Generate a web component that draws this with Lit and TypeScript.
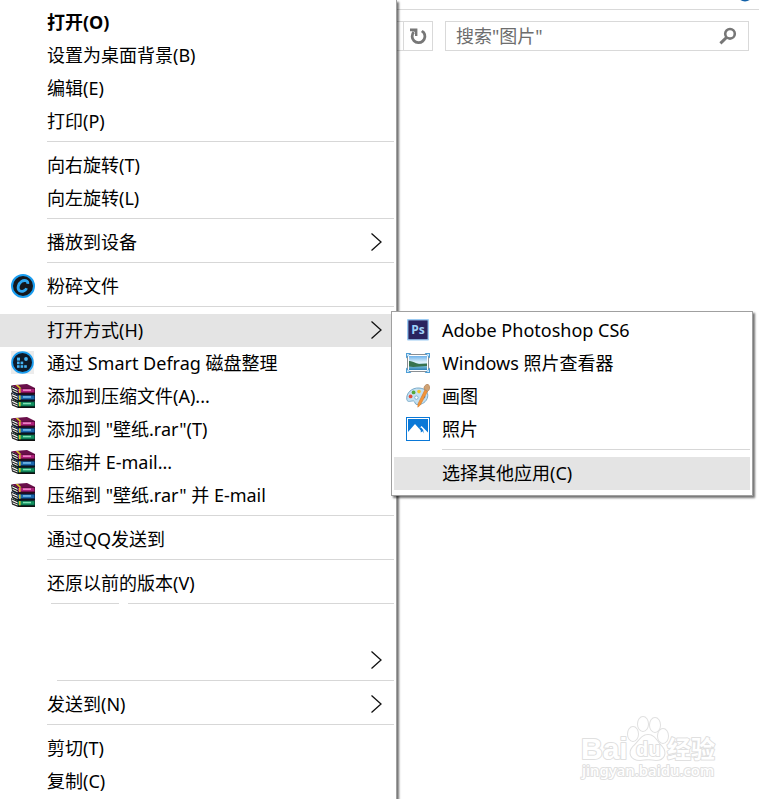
import { LitElement, html, css, svg, nothing, TemplateResult } from "lit";
import { customElement } from "lit/decorators.js";
import { classMap } from "lit/directives/class-map.js";

type Entry = {
  label?: string;
  icon?: TemplateResult;
  arrow?: boolean;
  bold?: boolean;
  active?: boolean;
  children?: Entry[];
  separator?: "full" | "split" | "short";
};

const book = (y: number, top: string, light: string, mid: string, dark: string) => svg`
  <g transform="translate(0 ${y})">
    <path d="M0 1.6 L7 4.6 V10.6 L1 8 Z" fill="#1c1c1c"/>
    <path d="M1 3.2 L6.6 5.8 V7 L1.2 4.6 Z M1.4 5.8 L6.6 8.2 V9.2 L1.8 7 Z" fill="#f6f6f6"/>
    <path d="M0.4 1.2 L16 0 L24 4 L7 5.2 Z" fill="${top}"/>
    <rect x="7" y="4" width="17" height="6.6" fill="${dark}"/>
    <rect x="7" y="4.8" width="16.4" height="3.6" fill="${mid}"/>
    <rect x="12" y="5.4" width="8" height="1.5" fill="${light}"/>
    <rect x="8" y="4.6" width="1.6" height="4.4" fill="#d8c52a"/>
    <rect x="7" y="9.4" width="17" height="1.200" fill="#101010"/>
  </g>`;

const iconRar = html`<svg class="pic" viewBox="0 0 24 24" aria-hidden="true">
  ${book(13.4, "#083a2c", "#7fe0b4", "#12905f", "#04382a")}
  ${book(6.8, "#0a2c58", "#7cc0ee", "#1c68ac", "#08244a")}
  ${book(0, "#6a0f4a", "#f08acb", "#ac2079", "#4c0832")}
  <path d="M4.6 0.9 H7 L10.6 4.6 H8.4 Z" fill="#d8c52a"/>
</svg>`;

const iconShred = html`<svg class="pic" viewBox="0 0 24 24" aria-hidden="true">
  <circle cx="12" cy="12" r="11" fill="#15181d" stroke="#1a9df0" stroke-width="2"/>
  <path d="M16.8 9.8 C17.2 6.4 13.2 5.7 10.6 7.4 C7.2 9.7 6 14.6 8.4 16.6 C10.6 18.2 14.4 17 15.6 14.2"
    fill="none" stroke="#2fa8f2" stroke-width="2.8"/>
</svg>`;

const iconDefrag = html`<svg class="pic" viewBox="0 0 24 24" aria-hidden="true">
  <rect width="23" height="23" fill="#ececec"/>
  <circle cx="11.5" cy="11.5" r="10.4" fill="#0e1a2a" stroke="#1a9df0" stroke-width="1.8"/>
  <g fill="#45b4f5">
    <rect x="6" y="6.6" width="3" height="3"/><circle cx="15" cy="8" r="1.9"/>
    <rect x="6" y="10.6" width="2.6" height="2.6"/><rect x="9.6" y="10.6" width="2.6" height="2.6"/>
    <rect x="6" y="14.2" width="2.6" height="2.6"/><rect x="9.6" y="14.2" width="2.6" height="2.6"/>
    <rect x="13.2" y="14.2" width="2.6" height="2.6"/>
  </g>
</svg>`;

const iconPs = html`<svg class="pic" viewBox="0 0 24 24" aria-hidden="true">
  <rect x="1" y="1" width="22" height="21.6" rx="1" fill="#9ccbf3"/>
  <rect x="2.4" y="2.4" width="19.2" height="18.8" fill="#29235f"/>
  <text class="ps" x="12" y="16" text-anchor="middle">Ps</text>
</svg>`;

const iconViewer = html`<svg class="pic" viewBox="0 0 24 24" aria-hidden="true">
  <defs>
    <linearGradient id="sky" x1="0" y1="0" x2="0" y2="1">
      <stop offset="0" stop-color="#6db1ea"/><stop offset=".45" stop-color="#e2f3fc"/>
      <stop offset=".75" stop-color="#6fb7d8"/><stop offset="1" stop-color="#2c7fb4"/>
    </linearGradient>
  </defs>
  <rect x="1.5" y="3.5" width="21" height="17" fill="#fff" stroke="#8a8f94"/>
  <rect x="3" y="5" width="18" height="14" fill="url(#sky)"/>
  <path d="M3 10 C6 9.4 9 12.4 13 13 L21 12.4 V15 C15 15 9 16.6 3 15.6 Z" fill="#37734f"/>
  <g fill="#4f9fd6">
    <path d="M0 2 H5.4 L0 7.400 Z"/><path d="M24 2 H18.600 L24 7.400 Z"/>
    <path d="M0 22 H5.4 L0 16.600 Z"/><path d="M24 22 H18.600 L24 16.600 Z"/>
  </g>
  <g fill="#d5eafa">
    <rect x="1" y="3" width="1.800" height="1.800"/><rect x="21.200" y="3" width="1.800" height="1.800"/>
    <rect x="1" y="19.200" width="1.800" height="1.800"/><rect x="21.200" y="19.200" width="1.800" height="1.800"/>
  </g>
</svg>`;

const iconPaint = html`<svg class="pic" viewBox="0 0 24 24" aria-hidden="true">
  <path d="M.8 15.5 C-.2 9 6 3.5 13 4 C19 4.4 22.6 8 21.6 13 C20.8 17.6 16 21 11 20.6 C8.6 20.4 9.4 17.6 7.6 17 C5 16.6 1.6 19 .8 15.5 Z"
    fill="#c3e0f2" stroke="#7aabc9"/>
  <circle cx="4.6" cy="12.4" r="1.9" fill="#e2503c"/>
  <circle cx="7.6" cy="8.4" r="1.9" fill="#56a83a"/>
  <circle cx="13" cy="7.6" r="1.8" fill="#f2c62c"/>
  <circle cx="17.6" cy="12.8" r="1.8" fill="#3a7fd0"/>
  <circle cx="10.4" cy="13.6" r="1.7" fill="#fff" stroke="#6a9fc0" stroke-width=".7"/>
  <path d="M19.2 5.2 L21.8 6.8 L14.4 21 L11.8 23.2 L12 19.800 Z" fill="#f2953a" stroke="#d2721c" stroke-width=".5"/>
  <path d="M18 5 C17.4 2.6 19.4 .8 22 -.4 C21.800 1.2 24.6 1.6 23.800 4.4 C23.2 6 22.4 7 21.4 7.4 Z" fill="#cfa274" stroke="#a0734a" stroke-width=".5"/>
</svg>`;

const iconPhotos = html`<svg class="pic" viewBox="0 0 24 24" aria-hidden="true">
  <rect width="24" height="24" fill="#0a78d7"/>
  <path d="M1 1 H23 V23 H1 Z M2 2 V15 L9 7 L13 11.600 L15.600 9 L22 15.600 V2 Z" fill="#fff" fill-rule="evenodd"/>
  <path d="M13 11.400 L14.800 13.400 V15.400 L16.6 14.2 L17.8 16.6 L17.2 13 L15.6 11 L14.4 10.2 Z" fill="#0a78d7"/>
</svg>`;

const chevron = html`<svg class="chevron" viewBox="0 0 12 20" aria-hidden="true">
  <path d="M1.5 1.5 L11 10 L1.5 18.5" fill="none" stroke="#111" stroke-width="1.3"/>
</svg>`;

const openWith: Entry[] = [
  { label: "Adobe Photoshop CS6", icon: iconPs },
  { label: "Windows 照片查看器", icon: iconViewer },
  { label: "画图", icon: iconPaint },
  { label: "照片", icon: iconPhotos },
  { separator: "full" },
  { label: "选择其他应用(C)", active: true },
];

const mainMenu: Entry[] = [
  { label: "打开(O)", bold: true },
  { label: "设置为桌面背景(B)" },
  { label: "编辑(E)" },
  { label: "打印(P)" },
  { separator: "full" },
  { label: "向右旋转(T)" },
  { label: "向左旋转(L)" },
  { separator: "full" },
  { label: "播放到设备", arrow: true },
  { separator: "full" },
  { label: "粉碎文件", icon: iconShred },
  { separator: "full" },
  { label: "打开方式(H)", arrow: true, active: true, children: openWith },
  { label: "通过 Smart Defrag 磁盘整理", icon: iconDefrag },
  { label: "添加到压缩文件(A)...", icon: iconRar },
  { label: '添加到 "壁纸.rar"(T)', icon: iconRar },
  { label: "压缩并 E-mail...", icon: iconRar },
  { label: '压缩到 "壁纸.rar" 并 E-mail', icon: iconRar },
  { separator: "full" },
  { label: "通过QQ发送到" },
  { separator: "full" },
  { label: "还原以前的版本(V)" },
  { separator: "split" },
  { label: "" },
  { label: "", arrow: true },
  { separator: "short" },
  { label: "发送到(N)", arrow: true },
  { separator: "full" },
  { label: "剪切(T)" },
  { label: "复制(C)" },
];

@customElement("context-menu")
class ContextMenu extends LitElement {
  static properties = { entries: { attribute: false } };
  declare entries: Entry[];

  static styles = css`
    :host {
      display: block;
      box-sizing: border-box;
      background: #fff;
      border: 1px solid #a0a0a0;
      box-shadow: 2px 2px 2px rgba(0, 0, 0, 0.55);
      padding: 2px 2px 5px;
    }
    .list { list-style: none; margin: 0; padding: 0; }
    .row { position: relative; }
    .item {
      display: flex;
      align-items: center;
      box-sizing: border-box;
      width: 100%;
      height: 33px;
      border: 0;
      padding: 0 12px 2px 11px;
      background: none;
      color: #000;
      font: inherit;
      text-align: left;
      white-space: nowrap;
    }
    .active { background: #e4e4e4; }
    .bold { font-weight: 700; }
    .icon { flex: none; display: flex; width: 36px; }
    .pic { width: 24px; height: 24px; display: block; }
    .ps { font: 700 12px "Open Sans", sans-serif; fill: #9fd0f8; }
    .label { flex: 1; }
    .chevron { width: 12px; height: 20px; }
    .separator { display: flex; gap: 9px; height: 1px; padding: 3px 0 7px 47px; }
    .line { flex: 1; background: #d7d7d7; }
    .split { padding-left: 51px; }
    .split .line:first-child { flex: none; width: 68px; }
    .short { padding-left: 57px; }
    .submenu { position: absolute; z-index: 1; top: -3px; left: calc(100% - 3px); width: 362px; }
    :host(.submenu) .separator { padding-left: 48px; }
    :host(.submenu) .item { padding-left: 12px; }
  `;

  private renderEntry(e: Entry) {
    if (e.separator) {
      const kind = { separator: true, split: e.separator === "split", short: e.separator === "short" };
      return html`<li class=${classMap(kind)} role="separator">
        <span class="line"></span>${e.separator === "split" ? html`<span class="line"></span>` : nothing}
      </li>`;
    }
    return html`<li class="row" role="none">
      <button class=${classMap({ item: true, active: !!e.active, bold: !!e.bold })} role="menuitem">
        <span class="icon">${e.icon ?? nothing}</span>
        <span class="label">${e.label}</span>
        ${e.arrow ? chevron : nothing}
      </button>
      ${e.children ? html`<context-menu class="submenu" .entries=${e.children}></context-menu>` : nothing}
    </li>`;
  }

  render() {
    return html`<ul class="list" role="menu">${(this.entries ?? []).map((e) => this.renderEntry(e))}</ul>`;
  }
}

@customElement("app-root")
class AppRoot extends LitElement {
  static styles = css`
    :host {
      display: flex;
      min-height: 100vh;
      overflow: hidden;
      background: #fff;
      font: 18px/24px "Noto Sans", "Noto Sans CJK SC", sans-serif;
    }
    .menu {
      flex: none;
      width: 397px;
      position: relative;
      z-index: 1;
      border-width: 0 1px 0 0;
      padding: 6px 2px 0 0;
    }
    .explorer { flex: 1; min-width: 0; display: flex; flex-direction: column; }
    .ribbon {
      display: flex;
      justify-content: flex-end;
      height: 9px;
      overflow: hidden;
      border-bottom: 1px solid #d9d9d9;
      padding-right: 8px;
    }
    .help { width: 12px; height: 2px; }
    .bar { display: flex; gap: 12px; padding: 11px 10px 0 0; }
    .address {
      display: flex;
      box-sizing: border-box;
      width: 36px;
      height: 30px;
      border: solid #d9d9d9;
      border-width: 1px 1px 1px 0;
      padding-left: 6px;
    }
    .refresh {
      flex: 1;
      display: flex;
      align-items: center;
      justify-content: center;
      padding: 0;
      border: 0;
      border-left: 1px solid #d9d9d9;
      background: none;
    }
    .glyph { width: 18px; height: 18px; flex: none; }
    .search {
      flex: 1;
      min-width: 0;
      display: flex;
      align-items: center;
      box-sizing: border-box;
      height: 30px;
      border: 1px solid #d9d9d9;
      padding: 0 11px 0 10px;
    }
    .field {
      flex: 1;
      min-width: 0;
      border: 0;
      padding: 0;
      outline: 0;
      background: none;
      font: inherit;
      color: #6d6d6d;
    }
    .field::placeholder { color: #6d6d6d; opacity: 1; }
    .watermark { width: 144px; height: 70px; margin: auto 36px 14px auto; }
    .wm { fill: #fff; stroke: #e0e0e0; stroke-width: 2; stroke-linejoin: round; paint-order: stroke; font-family: "Liberation Sans", "Noto Sans CJK SC", sans-serif; font-weight: 700; }
    .wm-big { font-size: 30px; }
    .wm-du { font-size: 20px; }
    .wm-cn { font-size: 24px; }
    .wm-url { font-family: "Noto Sans", sans-serif; font-size: 15px; font-weight: 500; }
  `;

  render() {
    return html`
      <context-menu class="menu" .entries=${mainMenu}></context-menu>
      <main class="explorer">
        <div class="ribbon">
          <svg class="help" viewBox="0 0 12 2" aria-hidden="true"><circle cx="6" cy="-7" r="8.4" fill="#1261a8"/></svg>
        </div>
        <div class="bar">
          <div class="address">
            <button class="refresh" aria-label="刷新">
              <svg class="glyph" viewBox="0 0 18 18" aria-hidden="true">
                <path d="M4.8 5 A6.4 6.4 0 1 0 14.6 5.4 L12.800 4" fill="none" stroke="#777" stroke-width="2.8"/>
                <path d="M1 1.6 H8.4 V9 H6 V5 L4 4.2 H1 Z" fill="#777"/>
              </svg>
            </button>
          </div>
          <label class="search">
            <input class="field" type="text" aria-label="搜索" placeholder='搜索"图片"' />
            <svg class="glyph" viewBox="0 0 18 18" aria-hidden="true">
              <circle cx="11" cy="6.800" r="4.8" fill="none" stroke="#777" stroke-width="2.6"/>
              <path d="M8 10 L1.400 16.4" stroke="#777" stroke-width="3"/>
            </svg>
          </label>
        </div>
        <svg class="watermark" viewBox="0 0 144 70" role="img" aria-label="Baidu 经验">
          <g class="wm">
            <text class="wm-big" x="2" y="44">Bai</text>
            <ellipse cx="54" cy="19" rx="5" ry="7"/>
            <ellipse cx="64" cy="9" rx="5" ry="7"/>
            <ellipse cx="76" cy="10" rx="5" ry="7"/>
            <ellipse cx="84" cy="21" rx="5" ry="7"/>
            <path d="M69 20 C76 20 78 27 83 32 C88 38 85 45 77 45 C71 44 67 44 61 45 C52 45 49 38 54 32 C60 27 62 20 69 20 Z"/>
            <text class="wm-du" x="57" y="41">du</text>
            <text class="wm-cn" x="88" y="43">经验</text>
            <text class="wm-url" x="3" y="61">jingyan.baidu.com</text>
          </g>
        </svg>
      </main>
    `;
  }
}
